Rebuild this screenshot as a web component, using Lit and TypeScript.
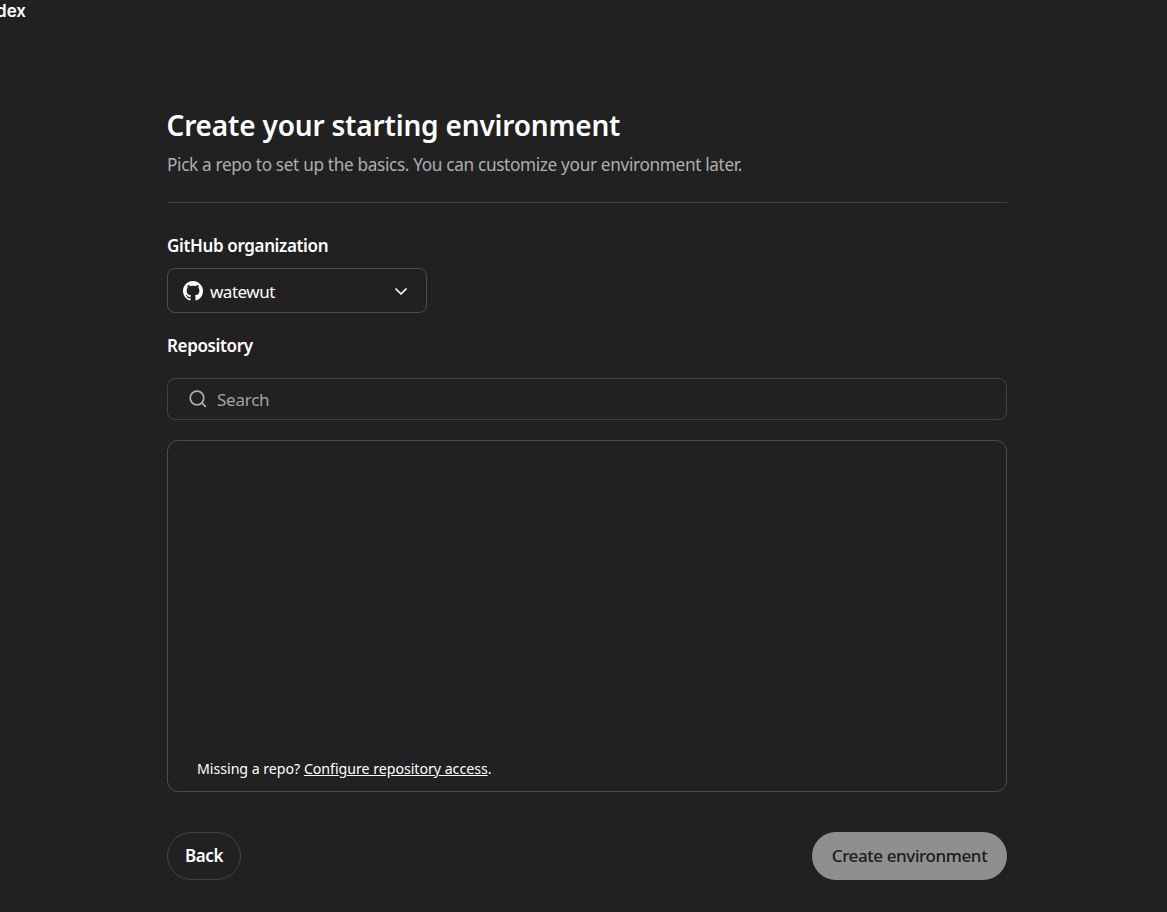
import { LitElement, html, css } from "lit";
import { customElement } from "lit/decorators.js";

@customElement("app-root")
export class AppRoot extends LitElement {
  static styles = css`
    :host {
      display: block;
      height: 912px;
      overflow: hidden;
      background: #212121;
      color: #fff;
      font-family: "Segoe UI", "Noto Sans", "Open Sans", sans-serif;
      font-size: 17px;
    }
    * { box-sizing: border-box; margin: 0; }
    button { font: inherit; color: inherit; background: none; }
    .brand {
      width: 26px;
      height: 22px;
      display: flex;
      justify-content: flex-end;
      overflow: hidden;
      font: 600 17px/22px Inter, sans-serif;
    }
    .page { width: 840px; margin: 84px 0 0 167px; }
    h1 {
      margin-left: -0.5px;
      padding-bottom: 2px;
      font-size: 28px;
      font-weight: 600;
      line-height: 38px;
      letter-spacing: -0.18px;
      white-space: nowrap;
    }
    .lead {
      margin-top: 6px;
      line-height: 26px;
      color: #afafaf;
      font-size: 17.2px;
      letter-spacing: -0.33px;
      white-space: nowrap;
    }
    .head { height: 97px; border-bottom: 1px solid #424242; }
    .label {
      line-height: 26px;
      font-size: 17px;
      font-weight: 600;
      letter-spacing: -0.36px;
      white-space: nowrap;
    }
    .org { margin-top: 30px; }
    .select {
      display: flex;
      align-items: center;
      width: 260px;
      height: 45px;
      margin-top: 9px;
      padding: 0 18px 0 15px;
      border: 1px solid #4d4d4d;
      border-radius: 8px;
    }
    .select span {
      flex: 1;
      margin-left: 7px;
      padding-top: 2px;
      text-align: left;
      letter-spacing: -0.5px;
    }
    .repo { margin-top: 20px; }
    .search {
      display: flex;
      align-items: center;
      height: 42px;
      margin-top: 19px;
      padding-left: 20px;
      gap: 9px;
      border: 1px solid #424242;
      border-radius: 8px;
      color: #a3a3a3;
      letter-spacing: -0.25px;
    }
    .list {
      display: flex;
      align-items: flex-end;
      height: 352px;
      margin-top: 20px;
      padding: 0 29px 11px;
      border: 1px solid #4d4d4d;
      border-radius: 11px;
      font-size: 14.2px;
      line-height: 22px;
      letter-spacing: -0.03px;
    }
    .list p { white-space: nowrap; }
    .link { text-decoration: underline; }
    .actions { display: flex; justify-content: space-between; margin-top: 40px; }
    .btn {
      height: 48px;
      border: 1px solid #424242;
      border-radius: 24px;
      padding: 0 0 2px;
      font-weight: 600;
      letter-spacing: -0.4px;
      white-space: nowrap;
    }
    .back { width: 74px; }
    .create {
      width: 195px;
      border: 0;
      background: #8f8f8f;
      color: #1b1b1b;
      font-weight: 550;
    }
    svg { display: block; flex: none; }
  `;

  render() {
    return html`
      <div class="brand">Codex</div>
      <main class="page">
        <header class="head">
          <h1>Create your starting environment</h1>
          <p class="lead">Pick a repo to set up the basics. You can customize your environment later.</p>
        </header>
        <div class="label org">GitHub organization</div>
        <button class="select">
          <svg width="20" height="20" viewBox="0 0 16 16" fill="#fff">
            <path d="M8 0C3.58 0 0 3.58 0 8c0 3.54 2.29 6.53 5.47 7.59.4.07.55-.17.55-.38 0-.19-.01-.82-.01-1.49-2.01.37-2.53-.49-2.69-.94-.09-.23-.48-.94-.82-1.13-.28-.15-.68-.52-.01-.53.63-.01 1.08.58 1.23.82.72 1.21 1.87.87 2.33.66.07-.52.28-.87.51-1.07-1.78-.2-3.64-.89-3.64-3.95 0-.87.31-1.59.82-2.15-.08-.2-.36-1.02.08-2.12 0 0 .67-.21 2.2.82.64-.18 1.32-.27 2-.27s1.36.09 2 .27c1.53-1.04 2.2-.82 2.2-.82.44 1.1.16 1.92.08 2.12.51.56.82 1.27.82 2.15 0 3.07-1.87 3.75-3.65 3.95.29.25.54.73.54 1.48 0 1.07-.01 1.93-.01 2.2 0 .21.15.46.55.38A8.01 8.01 0 0 0 16 8c0-4.42-3.58-8-8-8Z" />
          </svg>
          <span>watewut</span>
          <svg width="14" height="14" viewBox="0 0 14 14" fill="none" stroke="#fff" stroke-width="1.7" stroke-linecap="round" stroke-linejoin="round">
            <path d="M2 5 7 10l5-5" />
          </svg>
        </button>
        <div class="label repo">Repository</div>
        <div class="search">
          <svg width="20" height="20" viewBox="0 0 20 20" fill="none" stroke="#afafaf" stroke-width="1.7" stroke-linecap="round">
            <circle cx="9" cy="9" r="6.8" />
            <path d="m14 14 3.3 3.3" />
          </svg>
          <span>Search</span>
        </div>
        <section class="list">
          <p>Missing a repo? <span class="link">Configure repository access</span>.</p>
        </section>
        <footer class="actions">
          <button class="btn back">Back</button>
          <button class="btn create" disabled>Create environment</button>
        </footer>
      </main>
    `;
  }
}
